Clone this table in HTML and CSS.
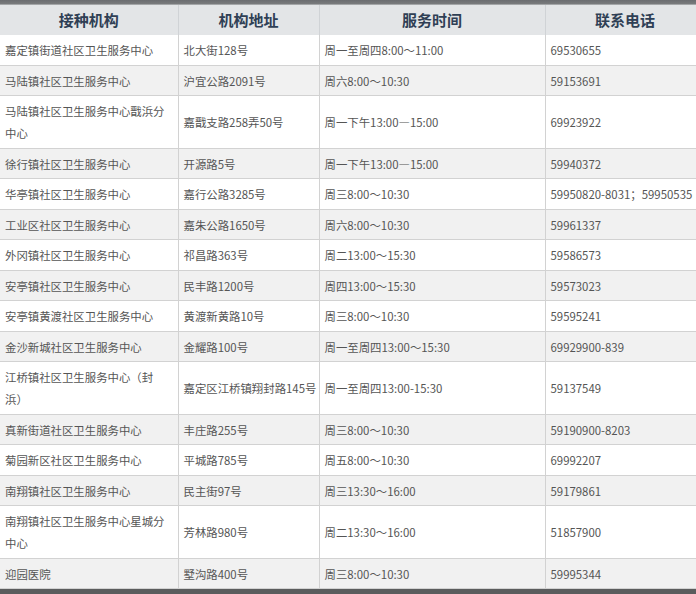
FILE: index.html
```html
<!DOCTYPE html>
<html lang="zh-CN">
<head>
<meta charset="utf-8">
<link rel="stylesheet" href="styles.css">
</head>
<body>
<div class="topbar"></div>
<table class="sched">
<colgroup><col class="c1"><col class="c2"><col class="c3"><col class="c4"></colgroup>
<thead>
<tr><th>接种机构</th><th>机构地址</th><th>服务时间</th><th>联系电话</th></tr>
</thead>
<tbody>
<tr><td>嘉定镇街道社区卫生服务中心</td><td>北大街128号</td><td>周一至周四8:00～11:00</td><td>69530655</td></tr>
<tr><td>马陆镇社区卫生服务中心</td><td>沪宜公路2091号</td><td>周六8:00～10:30</td><td>59153691</td></tr>
<tr><td>马陆镇社区卫生服务中心戬浜分<br>中心</td><td>嘉戬支路258弄50号</td><td>周一下午13:00—15:00</td><td>69923922</td></tr>
<tr><td>徐行镇社区卫生服务中心</td><td>开源路5号</td><td>周一下午13:00—15:00</td><td>59940372</td></tr>
<tr><td>华亭镇社区卫生服务中心</td><td>嘉行公路3285号</td><td>周三8:00～10:30</td><td>59950820-8031；59950535</td></tr>
<tr><td>工业区社区卫生服务中心</td><td>嘉朱公路1650号</td><td>周六8:00～10:30</td><td>59961337</td></tr>
<tr><td>外冈镇社区卫生服务中心</td><td>祁昌路363号</td><td>周二13:00～15:30</td><td>59586573</td></tr>
<tr><td>安亭镇社区卫生服务中心</td><td>民丰路1200号</td><td>周四13:00～15:30</td><td>59573023</td></tr>
<tr><td>安亭镇黄渡社区卫生服务中心</td><td>黄渡新黄路10号</td><td>周三8:00～10:30</td><td>59595241</td></tr>
<tr><td>金沙新城社区卫生服务中心</td><td>金耀路100号</td><td>周一至周四13:00～15:30</td><td>69929900-839</td></tr>
<tr><td>江桥镇社区卫生服务中心（封<br>浜）</td><td>嘉定区江桥镇翔封路145号</td><td>周一至周四13:00-15:30</td><td>59137549</td></tr>
<tr><td>真新街道社区卫生服务中心</td><td>丰庄路255号</td><td>周三8:00～10:30</td><td>59190900-8203</td></tr>
<tr><td>菊园新区社区卫生服务中心</td><td>平城路785号</td><td>周五8:00～10:30</td><td>69992207</td></tr>
<tr><td>南翔镇社区卫生服务中心</td><td>民主街97号</td><td>周三13:30～16:00</td><td>59179861</td></tr>
<tr><td>南翔镇社区卫生服务中心星城分<br>中心</td><td>芳林路980号</td><td>周二13:30～16:00</td><td>51857900</td></tr>
<tr><td>迎园医院</td><td>墅沟路400号</td><td>周三8:00～10:30</td><td>59995344</td></tr>
</tbody>
</table>
<div class="bottombar"></div>
</body>
</html>
```
FILE: styles.css
```css
html, body {
  margin: 0;
  padding: 0;
  overflow: hidden;
  background: #5e5f60;
}
body {
  width: 696px;
  height: 594px;
  font-family: "Noto Sans CJK SC", "Noto Sans", sans-serif;
}
.topbar {
  height: 5px;
  background: linear-gradient(180deg, #6b6d70 0%, #77797b 70%, #b9bcbe 100%);
}
.sched {
  border-collapse: collapse;
  table-layout: fixed;
  width: 705px;
  background: #fff;
}
.c1 { width: 178px; }
.c2 { width: 141px; }
.c3 { width: 226px; }
.c4 { width: 160px; }
.sched th {
  height: 30px;
  padding: 0;
  box-sizing: border-box;
  background: #e3e5e7;
  color: #2f3f55;
  font-size: 15px;
  font-weight: bold;
  text-align: center;
  line-height: 30px;
  border-left: 1px solid #d0d3d6;
  border-right: 1px solid #d0d3d6;
}
.sched th:first-child { border-left: none; }
.sched td {
  padding: 4px 5px 3.5px;
  font-size: 11.4px;
  line-height: 22px;
  color: #555;
  text-align: left;
  vertical-align: middle;
  border: 1px solid #d2d2d2;
  border-top: none;
  white-space: nowrap;
  overflow: hidden;
}
.sched td:first-child { border-left: none; }
.sched tbody tr:nth-child(even) td {
  background: #f1f1f1;
}
.bottombar {
  height: 10px;
  background: #5b5c5d;
}
```
